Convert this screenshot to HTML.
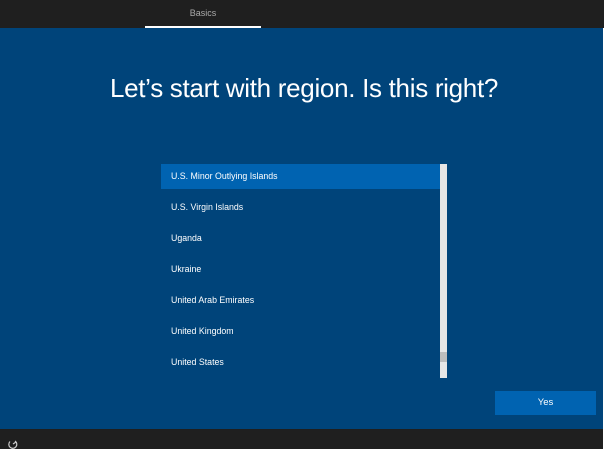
<!DOCTYPE html>
<html><head><style>
body{margin:0;width:615px;height:462px;background:#fff;position:relative;overflow:hidden;font-family:"Liberation Sans",sans-serif}
.top{position:absolute;left:0;top:0;width:604px;height:28px;background:#1f1f1f}
.tab{position:absolute;left:145px;top:8px;width:116px;text-align:center;color:#aaa;font-size:9px}
.main{position:absolute;left:0;top:28px;width:603px;height:401px;background:#00447a}
.bot{position:absolute;left:0;top:429px;width:603px;height:20px;background:#1f1f1f}
h1{position:absolute;left:0;width:608px;top:73px;margin:0;text-align:center;color:#fff;font-weight:300;font-size:26px;letter-spacing:-0.3px}
.row{position:absolute;left:161px;width:279px;height:25px;color:#fff;font-size:8.8px;line-height:25px;padding-left:10px;box-sizing:border-box}
.sel{background:#0063b1}
.sb{position:absolute;left:440px;top:164px;width:7px;height:214px;background:#e6e6e6}
.th{position:absolute;left:440px;top:352px;width:7px;height:10px;background:#bdbdbd}
.yes{position:absolute;left:495px;top:391px;width:101px;height:24px;background:#0063b1;color:#fff;font-size:9.5px;text-align:center;line-height:24px}
</style></head><body>
<div class="top"><div class="tab">Basics</div></div>
<div style="position:absolute;left:145px;top:26px;width:116px;height:2px;background:#fff"></div>
<div class="main"></div>
<h1>Let’s start with region. Is this right?</h1>
<div class="row sel" style="top:164px">U.S. Minor Outlying Islands</div>
<div class="row" style="top:195px">U.S. Virgin Islands</div>
<div class="row" style="top:226px">Uganda</div>
<div class="row" style="top:257px">Ukraine</div>
<div class="row" style="top:288px">United Arab Emirates</div>
<div class="row" style="top:319px">United Kingdom</div>
<div class="row" style="top:350px">United States</div>
<div class="sb"></div><div class="th"></div>
<div class="yes">Yes</div>
<div class="bot"><svg style="position:absolute;left:7px;top:9px" width="12" height="12" viewBox="0 0 12 12"><path d="M3 3.5A4 4 0 1 0 8 3" fill="none" stroke="#ccc" stroke-width="1.2"/><path d="M6 6L9 4" stroke="#ccc" stroke-width="1.2"/></svg></div>
</body></html>
